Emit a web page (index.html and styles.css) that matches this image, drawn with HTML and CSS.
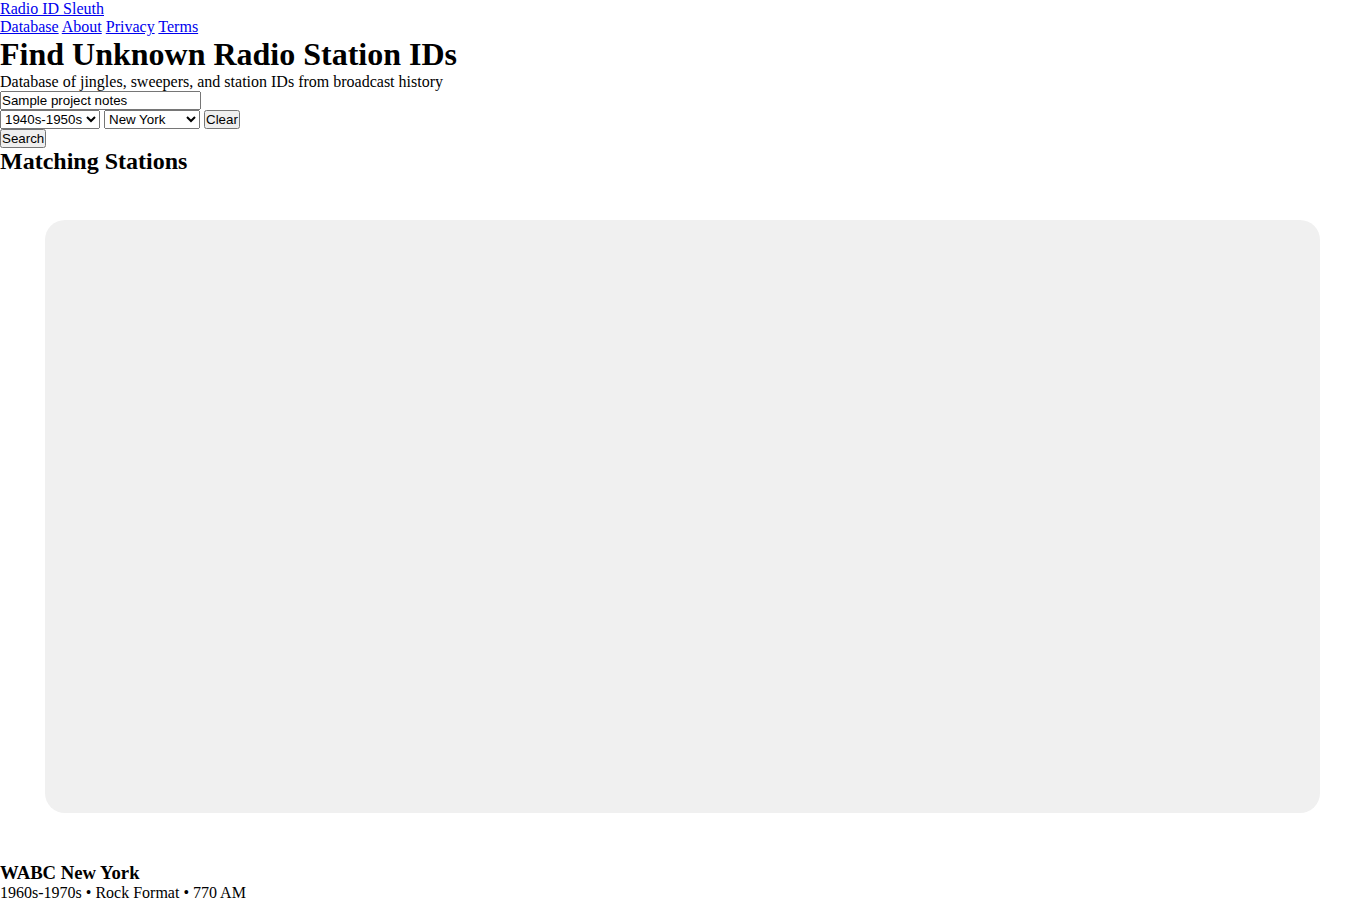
FILE: index.html
```html
<!DOCTYPE html>
<html lang="en">
<head>
    <meta charset="UTF-8">
    <meta name="viewport" content="width=device-width, initial-scale=1.0">
    <title>Radio ID Sleuth</title>
    <link rel="stylesheet" href="styles.css">
</head>
<body>
    <header class="site-header">
        <div class="logo"><a href="#">Radio ID Sleuth</a></div>
        <nav class="main-nav">
            <a href="#">Database</a>
            <a href="#">About</a>
            <a href="#">Privacy</a>
            <a href="#">Terms</a>
        </nav>
    </header>

    <main>
        <section class="hero">
            <h1>Find Unknown Radio Station IDs</h1>
            <p>Database of jingles, sweepers, and station IDs from broadcast history</p>
        </section>

        <form class="search-form" id="searchForm">
            <div class="row">
                <input type="text" id="query" value="Sample project notes">
            </div>
            <div class="row">
                <select id="era">
                    <option>1940s-1950s</option>
                    <option>1960s-1970s</option>
                    <option>1980s-1990s</option>
                </select>
                <select id="market">
                    <option>New York</option>
                    <option>Los Angeles</option>
                    <option>Chicago</option>
                    <option>San Francisco</option>
                </select>
                <button type="reset">Clear</button>
            </div>
            <div class="row">
                <button type="submit">Search</button>
            </div>
        </form>

        <section class="results">
            <h2>Matching Stations</h2>
            <article class="station">
                <div class="station-media"></div>
            </article>
            <h3>WABC New York</h3>
            <p>1960s-1970s &bull; Rock Format &bull; 770 AM</p>
        </section>
    </main>
</body>
</html>
```

FILE: styles.css
```css
* {
    margin: 0;
    padding: 0;
}
body {
    font-family: "Liberation Serif", serif;
}
.search-form input[type="text"] {
    width: 197px;
}
#era {
    width: 100px;
}
#market {
    width: 96px;
}
.station {
    padding: 45px 45px 49px;
}
.station-media {
    height: 593px;
    background-color: #f0f0f0;
    border-radius: 20px;
}
```
